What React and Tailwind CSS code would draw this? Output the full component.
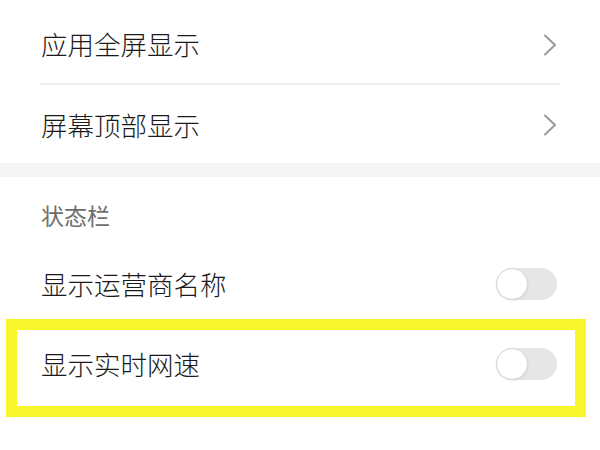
import React from "react";

const font = { fontFamily: '"Noto Sans CJK SC", "Noto Sans", sans-serif' };

function Chevron() {
  return (
    <svg width="14" height="22" viewBox="0 0 14 22" className="block">
      <polyline points="2,1.5 12,11 2,20.5" fill="none" stroke="#9a9a9a" strokeWidth="2" strokeLinecap="round" strokeLinejoin="round" />
    </svg>
  );
}

function Toggle() {
  return (
    <div className="w-[61px] h-[32px] rounded-full bg-[#e6e6e6] relative">
      <div className="absolute left-0 top-0 w-[32px] h-[32px] rounded-full bg-white border border-[#d6d6d6] shadow-[0_1px_2px_rgba(0,0,0,0.08)]" />
    </div>
  );
}

export default function App() {
  return (
    <div className="w-[600px] h-[450px] bg-white overflow-hidden text-[#1a1a1a] font-light" style={font}>
      <div className="h-[83px] pt-[6px] flex items-center justify-between pl-[41px] pr-[43px]">
        <span className="text-[26.5px] leading-none">应用全屏显示</span>
        <Chevron />
      </div>
      <div className="h-[2px] bg-[#ececec] ml-[40px] mr-[40px]" />
      <div className="h-[78px] pt-[2px] flex items-center justify-between pl-[41px] pr-[43px]">
        <span className="text-[26.5px] leading-none">屏幕顶部显示</span>
        <Chevron />
      </div>
      <div className="h-[14px] bg-[#f5f5f5]" />
      <div className="pt-[23px] pl-[41px] text-[23px] leading-[30px] text-[#6e6e6e] font-normal">状态栏</div>
      <div className="mt-[14px] h-[80px] flex items-center justify-between pl-[41px] pr-[43px]">
        <span className="text-[26.5px] leading-none">显示运营商名称</span>
        <Toggle />
      </div>
      <div className="relative h-[80px] flex items-center justify-between pl-[41px] pr-[43px]">
        <span className="text-[26.5px] leading-none">显示实时网速</span>
        <Toggle />
        <div className="absolute left-[6px] right-[14px] top-[-5px] bottom-[-13px] border-[11px] border-[#f6f62a] pointer-events-none" />
      </div>
    </div>
  );
}
